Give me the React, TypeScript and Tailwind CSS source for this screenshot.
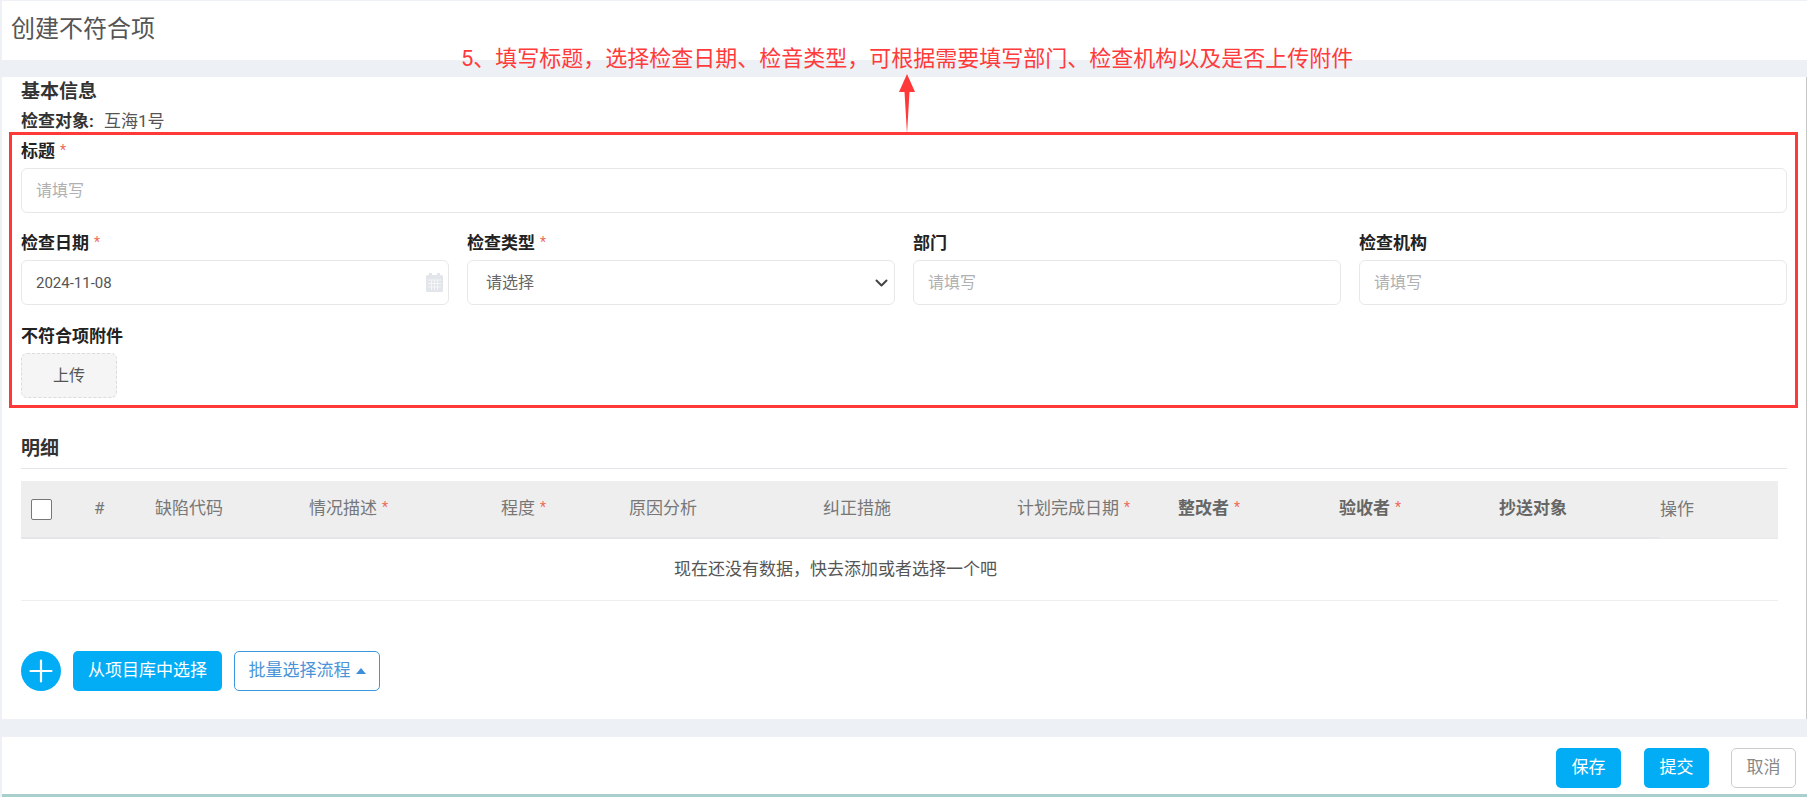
import React from "react";

const FONT = "font-['Roboto','Noto_Sans_CJK_SC',sans-serif]";

const Star = () => <span className="text-[#ee6a5a] text-[14px] font-normal ml-[5px] relative -top-[2px]">*</span>;

const Label = ({ text, required }: { text: string; required?: boolean }) => (
  <div className="h-[23px] leading-[23px] text-[17px] font-bold text-[#222] whitespace-nowrap">
    {text}
    {required && <Star />}
  </div>
);

const TextInput = ({ placeholder }: { placeholder: string }) => (
  <input
    readOnly
    placeholder={placeholder}
    className="block w-full h-[45px] px-[14px] text-[16px] border border-[#e8e8e8] rounded-[6px] bg-white outline-none placeholder:text-[#b0b0b0]"
  />
);

const CalendarIcon = () => (
  <svg width="17" height="19" viewBox="0 0 17 19" className="absolute right-[6px] top-[13px]">
    <rect x="3" y="0" width="3" height="4" fill="#e2e5e9" />
    <rect x="11" y="0" width="3" height="4" fill="#e2e5e9" />
    <rect x="0" y="2" width="17" height="17" rx="1.5" fill="#e2e5e9" />
    <path d="M2 7h13M2 10.5h13M2 14h13M5.5 7v10M8.5 7v10M11.5 7v10" stroke="#f5f6f8" strokeWidth="1" fill="none" />
  </svg>
);

const columns = [
  { text: "#" },
  { text: "缺陷代码" },
  { text: "情况描述", required: true },
  { text: "程度", required: true },
  { text: "原因分析" },
  { text: "纠正措施" },
  { text: "计划完成日期", required: true },
  { text: "整改者", required: true, bold: true },
  { text: "验收者", required: true, bold: true },
  { text: "抄送对象", bold: true },
];

const BLUE = "bg-[#03adf6]";

export default function App() {
  return (
    <div className={`${FONT} relative h-[797px] w-full overflow-hidden bg-[#edf0f5] pl-[2px] flex flex-col`}>
      <header className="h-[59px] mt-[1px] bg-white pl-[9px] pb-[3px] flex items-center text-[24px] text-[#555] shrink-0">
        创建不符合项
      </header>

      <div className="h-[17px] shrink-0" />

      <main className="h-[642px] bg-white pl-[19px] pt-[3px] shrink-0 border-r border-[#c8c8c8]">
        <h2 className="h-[24px] leading-[24px] text-[19px] font-bold text-[#333]">基本信息</h2>
        <div className="h-[24px] mt-[5px] leading-[24px] text-[17px] text-[#555] mb-[7px] flex">
          <span className="w-[83px] font-bold text-[#333]">检查对象:</span>
          <span>互海1号</span>
        </div>

        <div className="w-[1766px]">
          <Label text="标题" required />
          <div className="mt-[5px]">
            <TextInput placeholder="请填写" />
          </div>

          <div className="grid grid-cols-4 gap-x-[18px] mt-[19px]">
            <div>
              <Label text="检查日期" required />
              <div className="relative mt-[5px]">
                <input
                  readOnly
                  value="2024-11-08"
                  className="block w-full h-[45px] px-[14px] text-[15px] text-[#555] border border-[#e8e8e8] rounded-[6px] outline-none"
                />
                <CalendarIcon />
              </div>
            </div>
            <div>
              <Label text="检查类型" required />
              <div className="mt-[5px] h-[45px] pl-[18px] pr-[6px] flex items-center justify-between border border-[#e8e8e8] rounded-[6px] text-[16px] text-[#666]">
                请选择
                <svg width="13" height="8" viewBox="0 0 13 8" fill="none">
                  <path d="M1.5 1.5L6.5 6.5l5-5" stroke="#444" strokeWidth="2" strokeLinecap="round" strokeLinejoin="round" />
                </svg>
              </div>
            </div>
            <div>
              <Label text="部门" />
              <div className="mt-[5px]">
                <TextInput placeholder="请填写" />
              </div>
            </div>
            <div>
              <Label text="检查机构" />
              <div className="mt-[5px]">
                <TextInput placeholder="请填写" />
              </div>
            </div>
          </div>

          <div className="mt-[20px]">
            <Label text="不符合项附件" />
            <button className="mt-[5px] w-[96px] h-[45px] text-[16px] text-[#555] bg-[#f5f5f5] border border-dashed border-[#dcdcdc] rounded-[6px]">
              上传
            </button>
          </div>

          <h2 className="mt-[38px] h-[26px] leading-[26px] text-[19px] font-bold text-[#333]">明细</h2>
          <div className="mt-[6px] border-t border-[#e2e4e8]" />
        </div>

        <div className="w-[1757px] mt-[12px] text-[17px]">
          <div className="grid grid-cols-[73px_61px_154px_192px_128px_194px_194px_161px_161px_160px_161px_118px] h-[58px] bg-[#eeeeee] text-[#777]">
            <div className="pl-[10px] flex items-center border-b-2 border-[#e3e5e8]">
              <span className="block w-[21px] h-[21px] bg-white border border-[#777] rounded-[2px]" />
            </div>
            {columns.map((col) => (
              <div
                key={col.text}
                className={`flex items-center border-b-2 border-[#e3e5e8] whitespace-nowrap ${col.bold ? "font-bold text-[#666]" : ""}`}
              >
                {col.text}
                {col.required && <Star />}
              </div>
            ))}
            <div className="flex items-center pl-[10px] -ml-[10px] border-b border-[#e6e8ea]">操作</div>
          </div>
          <div className="h-[62px] pr-[128px] flex items-center justify-center text-[#555] border-b border-[#eeeeee]">
            现在还没有数据，快去添加或者选择一个吧
          </div>
        </div>

        <div className="flex items-center mt-[50px] text-[17px]">
          <button className={`${BLUE} w-[40px] h-[40px] rounded-full flex items-center justify-center`}>
            <svg width="24" height="24" viewBox="0 0 24 24" fill="none">
              <path d="M12 1.5v21M1.5 12h21" stroke="#fff" strokeWidth="2.2" strokeLinecap="round" />
            </svg>
          </button>
          <button className={`${BLUE} ml-[12px] w-[149px] h-[40px] rounded-[5px] text-white`}>从项目库中选择</button>
          <button className="ml-[12px] w-[146px] h-[40px] rounded-[5px] border border-[#3d97e0] text-[#4a94d8] flex items-center justify-center gap-[5px]">
            批量选择流程
            <svg width="10" height="6" viewBox="0 0 10 6">
              <path d="M5 0l5 6H0z" fill="#3d8fd8" />
            </svg>
          </button>
        </div>
      </main>

      <div className="h-[18px] shrink-0" />

      <footer className="h-[57px] bg-white flex items-start justify-end shrink-0 pt-[11px] pr-[11px] text-[17px]">
        <button className={`${BLUE} w-[65px] h-[40px] rounded-[5px] text-white`}>保存</button>
        <button className={`${BLUE} ml-[23px] w-[65px] h-[40px] rounded-[5px] text-white`}>提交</button>
        <button className="ml-[22px] w-[65px] h-[40px] rounded-[5px] bg-white border border-[#cccccc] text-[#888]">取消</button>
      </footer>
      <div className="h-[3px] bg-[#a9cfcd] shrink-0" />

      {/* annotation overlay */}
      <div className="absolute left-[9px] top-[132px] w-[1789px] h-[276px] border-[3px] border-[#ff3838] pointer-events-none" />
      <div className="absolute left-[461px] top-[42px] text-[22px] leading-[34px] text-[#ff3b3b] whitespace-nowrap">
        5、填写标题，选择检查日期、检音类型，可根据需要填写部门、检查机构以及是否上传附件
      </div>
      <svg width="18" height="60" viewBox="0 0 18 60" className="absolute left-[898px] top-[74px]">
        <path d="M9 0L17 18H11.5L9 60L6.5 18H1z" fill="#ff3838" />
      </svg>
    </div>
  );
}
